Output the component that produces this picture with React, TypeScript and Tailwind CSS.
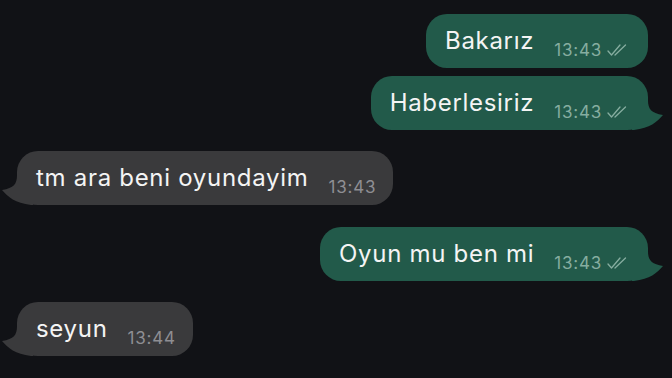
import React from 'react'

type Msg = {
  text: string
  time: string
  mine: boolean
  tail?: boolean
  mt: string
}

const messages: Msg[] = [
  { text: 'Bakarız', time: '13:43', mine: true, mt: 'mt-[14px]' },
  { text: 'Haberlesiriz', time: '13:43', mine: true, tail: true, mt: 'mt-[8px]' },
  { text: 'tm ara beni oyundayim', time: '13:43', mine: false, tail: true, mt: 'mt-[21px]' },
  { text: 'Oyun mu ben mi', time: '13:43', mine: true, tail: true, mt: 'mt-[22px]' },
  { text: 'seyun', time: '13:44', mine: false, tail: true, mt: 'mt-[21px]' },
]

function Ticks() {
  return (
    <svg width="24" height="14" viewBox="0 0 24 14" className="ml-[4px] mb-[3px]">
      <path d="M2 8 L5.5 12 L14 2" fill="none" stroke="#86ada0" strokeWidth="1.3" strokeLinecap="round" strokeLinejoin="round" />
      <path d="M9 12 L19.5 2" fill="none" stroke="#86ada0" strokeWidth="1.3" strokeLinecap="round" />
    </svg>
  )
}

function Tail({ mine }: { mine: boolean }) {
  if (mine) {
    return (
      <svg width="32" height="30" viewBox="0 0 32 30" className="absolute right-[-16px] bottom-0">
        <path d="M0 0 H16 C16 9 19 13 31 15 C25 22 18 28 2 30 H0 Z" fill="#225a4a" />
      </svg>
    )
  }
  return (
    <svg width="32" height="30" viewBox="0 0 32 30" className="absolute left-[-16px] bottom-0">
      <path d="M32 0 H16 C16 9 13 13 1 15 C7 22 14 28 30 30 H32 Z" fill="#3a3a3c" />
    </svg>
  )
}

function Bubble({ m }: { m: Msg }) {
  return (
    <div className={`flex ${m.mine ? 'justify-end' : 'justify-start'} ${m.mt}`}>
      <div
        className={`relative h-[54px] rounded-[21px] flex items-start pt-[13px] pl-[19px] ${
          m.mine ? 'bg-[#225a4a] pr-[18px]' : 'bg-[#3a3a3c] pr-[17px]'
        }`}
      >
        {m.tail && <Tail mine={m.mine} />}
        <span className="relative text-[24px] leading-[28px] tracking-[0.7px] text-[#f4f4f4] whitespace-nowrap">
          {m.text}
        </span>
        <span
          className={`relative ml-[20px] mt-[13px] flex items-end text-[17px] leading-[20px] tracking-[0.8px] whitespace-nowrap ${
            m.mine ? 'text-[#86ada0]' : 'text-[#8e8e93]'
          }`}
        >
          {m.time}
          {m.mine && <Ticks />}
        </span>
      </div>
    </div>
  )
}

export default function App() {
  return (
    <div
      className="w-[672px] h-[378px] overflow-hidden bg-[#111216] pl-[17px] pr-[24px] flex flex-col"
      style={{ fontFamily: 'Inter, "Noto Sans", sans-serif' }}
    >
      {messages.map((m, i) => (
        <Bubble key={i} m={m} />
      ))}
    </div>
  )
}
